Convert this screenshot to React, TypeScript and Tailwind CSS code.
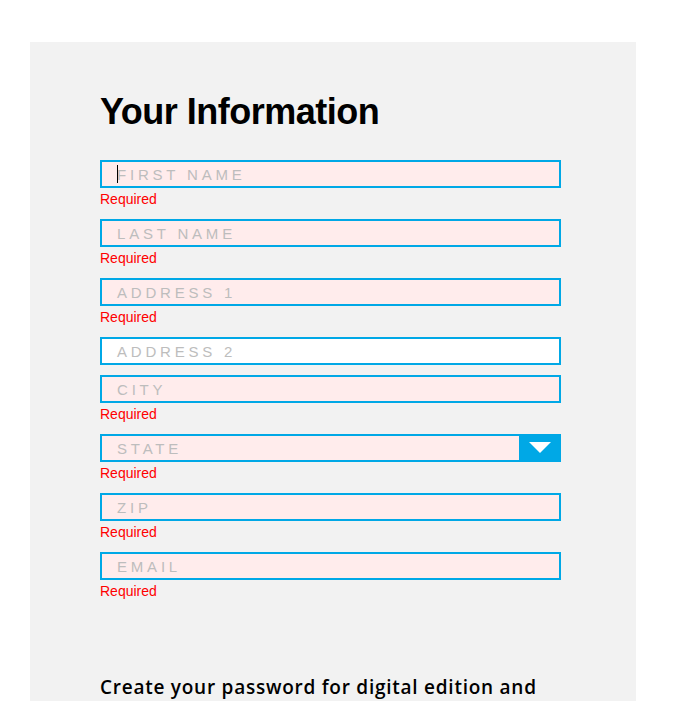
import React from "react";

type Field = { label: string; required: boolean; select?: boolean; caret?: boolean };

const fields: Field[] = [
  { label: "FIRST NAME", required: true, caret: true },
  { label: "LAST NAME", required: true },
  { label: "ADDRESS 1", required: true },
  { label: "ADDRESS 2", required: false },
  { label: "CITY", required: true },
  { label: "STATE", required: true, select: true },
  { label: "ZIP", required: true },
  { label: "EMAIL", required: true },
];

function Row({ f }: { f: Field }) {
  return (
    <div className="flex flex-col">
      <div
        className={`relative flex h-[28px] w-[461px] items-center border-2 border-[#00a8e6] ${
          f.required ? "bg-[#ffecec]" : "bg-white"
        }`}
      >
        {f.caret && <span className="absolute left-[15px] top-[3px] h-[18px] w-px bg-black" />}
        <span className="flex-1 pl-[15px] pt-[1px] text-[15px] leading-none tracking-[3.8px] text-[#bdbdbd] [font-family:'Liberation_Sans',Arial,sans-serif]">
          {f.label}
        </span>
        {f.select && (
          <div className="flex h-[28px] w-[42px] -mr-[2px] items-center justify-center bg-[#00a8e6]">
            <svg width="22" height="12" viewBox="0 0 22 12">
              <polygon points="0,0 22,0 11,11" fill="#ffffff" />
            </svg>
          </div>
        )}
      </div>
      {f.required && (
        <div className="h-[21px] text-[14px] leading-[23px] text-[#ff0000] [font-family:'Liberation_Sans',Arial,sans-serif]">
          Required
        </div>
      )}
    </div>
  );
}

export default function App() {
  return (
    <div className="min-h-[701px] bg-white pt-[42px] pl-[30px]">
      <div className="w-[606px] h-[659px] overflow-hidden bg-[#f2f2f2] pl-[70px] pt-[50px]">
        <h1 className="text-[36px] font-bold leading-[40px] tracking-[-0.5px] text-black [font-family:'Liberation_Sans',Arial,sans-serif]">
          Your Information
        </h1>
        <div className="mt-[28px] flex flex-col gap-[10px]">
          {fields.map((f) => (
            <Row key={f.label} f={f} />
          ))}
        </div>
        <p className="mt-[72px] text-[19px] font-semibold tracking-[0.75px] text-black [font-family:'Open_Sans',sans-serif]">
          Create your password for digital edition and
        </p>
      </div>
    </div>
  );
}
